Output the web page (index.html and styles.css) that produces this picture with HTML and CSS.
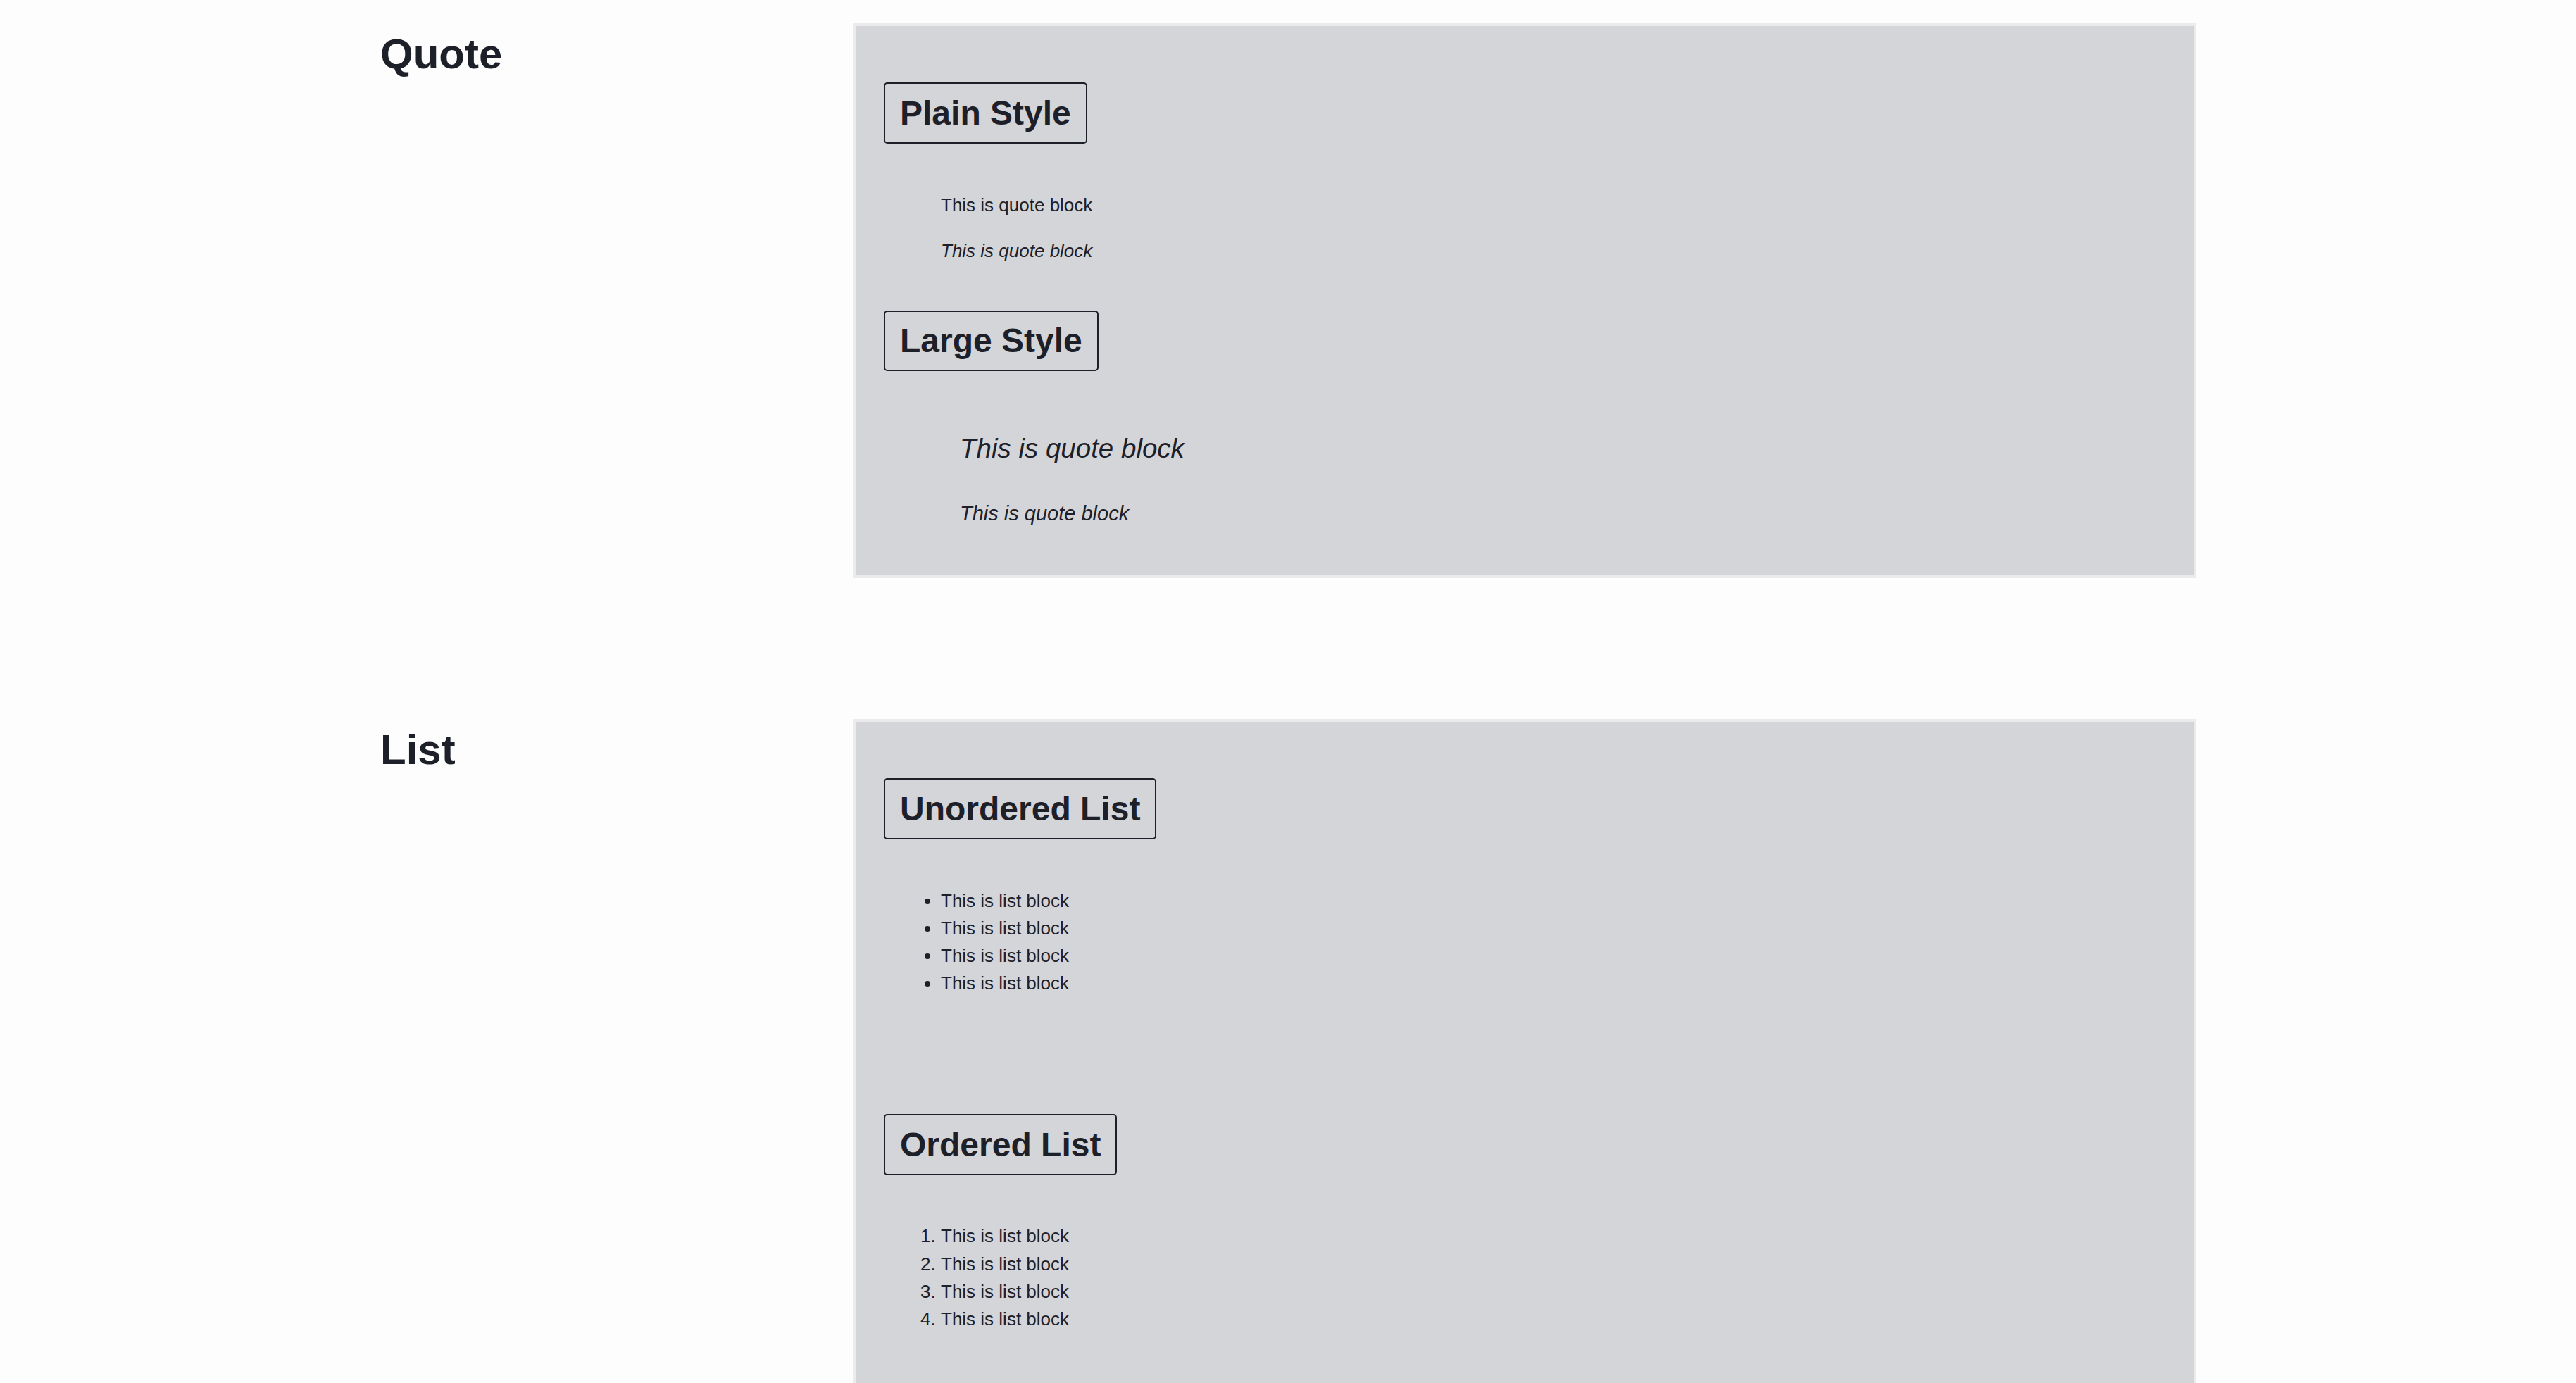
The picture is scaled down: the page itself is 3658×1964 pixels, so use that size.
FILE: index.html
```html
<!DOCTYPE html>
<html lang="en">
<head>
<meta charset="utf-8">
<title>Blocks</title>
<link rel="stylesheet" href="styles.css">
</head>
<body>
<main class="page">
  <section class="section">
    <h2 class="section-title">Quote</h2>
    <div class="panel panel-quote">
      <h3 class="label">Plain Style</h3>
      <p class="quote quote-first">This is quote block</p>
      <p class="quote quote-italic">This is quote block</p>
      <h3 class="label label-large">Large Style</h3>
      <p class="quote-large">This is quote block</p>
      <p class="quote-large-cite">This is quote block</p>
    </div>
  </section>

  <section class="section">
    <h2 class="section-title">List</h2>
    <div class="panel panel-list">
      <h3 class="label">Unordered List</h3>
      <ul class="list list-unordered">
        <li>This is list block</li>
        <li>This is list block</li>
        <li>This is list block</li>
        <li>This is list block</li>
      </ul>
      <h3 class="label">Ordered List</h3>
      <ol class="list list-ordered">
        <li>This is list block</li>
        <li>This is list block</li>
        <li>This is list block</li>
        <li>This is list block</li>
      </ol>
    </div>
  </section>
</main>
</body>
</html>
```

FILE: styles.css
```css
* {
  box-sizing: border-box;
}

html, body {
  margin: 0;
  padding: 0;
  background: #fdfdfd;
}

body {
  font-family: "Liberation Sans", Arial, sans-serif;
  color: #1d2029;
}

.page {
  width: 2580px;
  margin: 0 auto;
  padding-top: 33px;
}

.section {
  display: grid;
  grid-template-columns: 672px 1fr;
  align-items: start;
  margin-bottom: 200px;
}

.section-title {
  margin: 8px 0 0 1px;
  font-size: 60px;
  line-height: 1.2;
  font-weight: 700;
}

.panel {
  display: flex;
  flex-direction: column;
  align-items: flex-start;
  background: #d4d5d8;
  border: 4px solid #ebebeb;
  padding: 80px 40px 66px;
}

.label {
  margin: 0;
  font-size: 48px;
  line-height: 57.6px;
  font-weight: 700;
  padding: 12.5px 21px;
  border: 2px solid #1d2029;
  border-radius: 5px;
}

.quote {
  margin: 0 0 0 81px;
  font-size: 26px;
  line-height: 39px;
}

.quote-first {
  margin-top: 68.5px;
}

.quote-italic {
  font-style: italic;
  margin-top: 26px;
}

.label-large {
  margin-top: 64.5px;
}

.quote-large {
  margin: 81px 0 0 108px;
  font-size: 38.5px;
  line-height: 57.75px;
  font-style: italic;
}

.quote-large-cite {
  margin: 42px 0 0 108px;
  font-size: 29px;
  line-height: 43.5px;
  font-style: italic;
}

.list {
  margin: 67.5px 0 165.5px;
  padding-left: 81px;
  font-size: 26px;
  line-height: 39.3px;
}

.list-ordered {
  margin-top: 67.5px;
}
```
